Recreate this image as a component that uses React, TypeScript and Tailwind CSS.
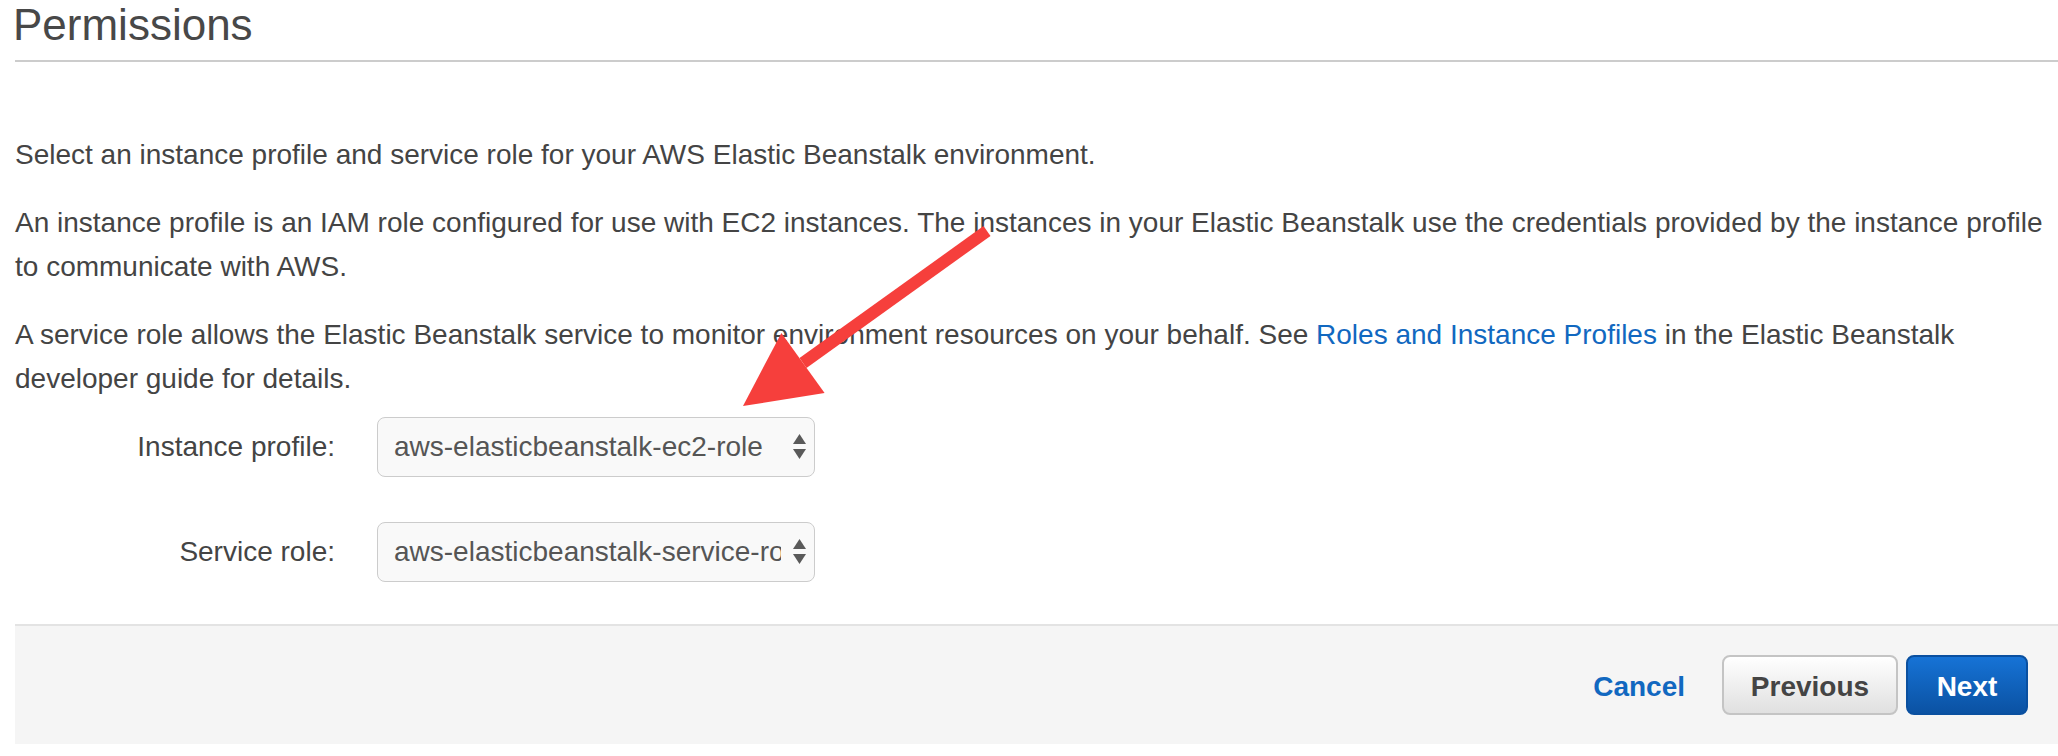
import React from "react";

const SelectBox = ({ value }: { value: string }) => {
  return (
    <div className="flex h-[60px] w-[438px] items-center rounded-[8px] border border-[#cccccc] bg-[#f9f9f9] pl-[16px] pr-[8px]">
      <span className="w-[387px] overflow-hidden whitespace-nowrap text-[28px] text-[#555]">
        {value}
      </span>
      <svg width="13" height="26" viewBox="0 0 13 26" className="ml-[12px] shrink-0">
        <polygon points="6.5,0 13,10 0,10" fill="#5a5a5a" />
        <polygon points="0,15 13,15 6.5,25" fill="#5a5a5a" />
      </svg>
    </div>
  );
};

const App = () => {
  return (
    <div className="relative h-[756px] w-[2058px] overflow-hidden bg-white font-['Liberation_Sans',Arial,sans-serif] text-[#444]">
      <div className="pl-[15px] pt-[4px]">
        {/* heading */}
        <h1 className="-ml-[2px] text-[44px] leading-[42px] text-[#484848]">Permissions</h1>
        <div className="mt-[14px] h-[2px] bg-[#cccccc]" />

        {/* description */}
        <div className="mt-[71px] flex flex-col gap-[24px] whitespace-nowrap text-[28px] leading-[44px]">
          <p>Select an instance profile and service role for your AWS Elastic Beanstalk environment.</p>
          <p>
            An instance profile is an IAM role configured for use with EC2 instances. The instances in your Elastic
            Beanstalk use the credentials provided by the instance profile
            <br />
            to communicate with AWS.
          </p>
          <p>
            A service role allows the Elastic Beanstalk service to monitor environment resources on your behalf. See{" "}
            <a className="text-[#1168c0]">Roles and Instance Profiles</a> in the Elastic Beanstalk
            <br />
            developer guide for details.
          </p>
        </div>

        {/* form */}
        <div className="mt-[16px] grid grid-cols-[320px_438px] items-center gap-x-[42px] gap-y-[45px] text-[28px]">
          <label className="text-right">Instance profile:</label>
          <SelectBox value="aws-elasticbeanstalk-ec2-role" />
          <label className="text-right">Service role:</label>
          <SelectBox value="aws-elasticbeanstalk-service-role" />
        </div>

        {/* footer */}
        <div className="mt-[42px] flex h-[120px] items-center justify-end border-t-2 border-[#e3e3e3] bg-[#f5f5f5] pr-[30px] text-[28px] font-bold">
          <button className="mr-[37px] pt-[4px] text-[#1168c0]">Cancel</button>
          <button className="mr-[8px] h-[60px] w-[176px] rounded-[8px] border-2 border-[#c4c4c4] bg-gradient-to-b from-white to-[#e0e0e0] pt-[4px] text-[#444]">
            Previous
          </button>
          <button className="h-[60px] w-[122px] rounded-[8px] border-2 border-[#0a50a0] bg-gradient-to-b from-[#1673d6] to-[#0b52a3] pt-[4px] text-white">
            Next
          </button>
        </div>
      </div>

      {/* red annotation arrow */}
      <svg
        className="pointer-events-none absolute left-0 top-0"
        width="2058"
        height="756"
        viewBox="0 0 2058 756"
      >
        <polygon
          points="990.5,235.9 983.5,226.1 799.5,358.1 806.5,367.9"
          fill="#f63f3c"
        />
        <polygon points="743,406 781.4,332.9 824.6,393.1" fill="#f63f3c" />
      </svg>
    </div>
  );
};

export default App;
